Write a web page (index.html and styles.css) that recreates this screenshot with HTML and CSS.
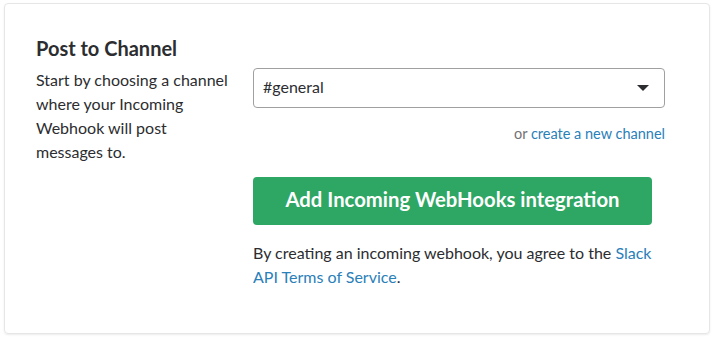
FILE: index.html
```html
<!DOCTYPE html>
<html>
<head>
    <title>Incoming WebHooks</title>
    <meta http-equiv="content-type" content="text/html; charset=UTF-8"/>
    <link rel="stylesheet" href="styles.css">
</head>
<body>
    <div class="card">
        <h2 class="card_title">Post to Channel</h2>
        <div class="card_row">
            <p class="card_desc">Start by choosing a channel where your Incoming Webhook will post messages to.</p>
            <div class="card_form">
                <div class="select">
                    <span>#general</span>
                    <i class="caret"></i>
                </div>
                <p class="new_channel">or <a href="#">create a new channel</a></p>
                <button class="btn_add">Add Incoming WebHooks integration</button>
                <p class="terms">By creating an incoming webhook, you agree to the <a href="#">Slack API Terms of Service</a>.</p>
            </div>
        </div>
    </div>
</body>
</html>
```

FILE: styles.css
```css
body{
    margin: 0;
    background-color: #fff;
    font-family: Lato, "Open Sans", sans-serif;
    color: #2c2d30;
}
a{
    color: #2a80b9;
    text-decoration: none;
}
.card{
    margin: 3px 4px 4px;
    height: 331px;
    box-sizing: border-box;
    padding: 32px 31px;
    border: 1px solid #e6e6e6;
    border-radius: 4px;
    box-shadow: 0 1px 2px rgba(0,0,0,0.08);
}
.card_title{
    margin: 0 0 8px;
    font-size: 20px;
    line-height: 24px;
    font-weight: 700;
}
.card_row{
    display: flex;
    gap: 19px;
}
.card_desc{
    width: 198px;
    flex-shrink: 0;
    margin: 0;
    font-size: 16px;
    line-height: 24px;
}
.card_form{
    width: 412px;
}
.select{
    height: 40px;
    box-sizing: border-box;
    border: 1px solid #a0a0a0;
    border-radius: 4px;
    padding: 0 15px 0 9px;
    display: flex;
    align-items: center;
    justify-content: space-between;
    font-size: 16px;
}
.select>span{
    margin-top: -3px;
}
.caret{
    width: 0;
    height: 0;
    border-left: 6px solid transparent;
    border-right: 6px solid transparent;
    border-top: 6px solid #2c2d30;
}
.new_channel{
    margin: 16px 0 0;
    text-align: right;
    font-size: 14.5px;
    line-height: 20px;
    color: #717274;
}
.btn_add{
    display: block;
    margin-top: 33px;
    width: 399px;
    height: 48px;
    border: none;
    border-radius: 4px;
    background-color: #2ea664;
    color: #fff;
    font-family: Lato, "Open Sans", sans-serif;
    font-size: 20.3px;
    font-weight: 700;
    padding-bottom: 5px;
}
.terms{
    width: 400px;
    margin: 16px 0 0;
    font-size: 16px;
    line-height: 24px;
}
```
